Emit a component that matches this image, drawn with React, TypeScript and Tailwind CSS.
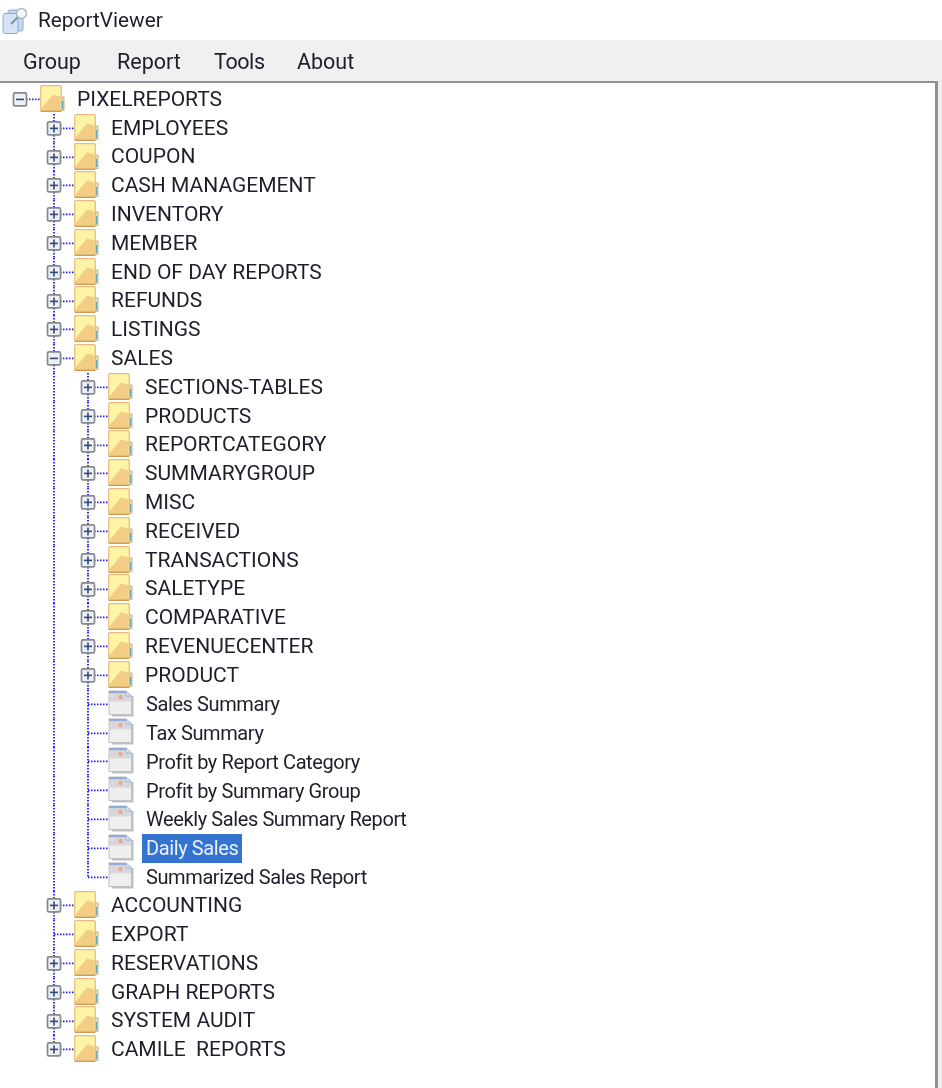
import React from "react";

const BLUE = "#1c1cf5";

type Mode = "pass" | "plus" | "minus" | "leaf" | "last" | "none" | "rootMinus" | "lastPlus";

function Connector({ mode }: { mode: Mode }) {
  // 34 wide cell; line centre at x=20 within the cell
  const cx = 20;
  const H = 28.8;
  const mid = H / 2;
  if (mode === "none") return <div className="h-[28.8px] w-[34px] shrink-0" />;
  const bottom = mode === "last" || mode === "lastPlus" ? mid : H;
  const showBox = mode === "plus" || mode === "minus" || mode === "rootMinus" || mode === "lastPlus";
  const hasPlus = mode === "plus" || mode === "lastPlus";
  return (
    <svg width="34" height={H} viewBox={`0 0 34 ${H}`} className="block shrink-0 overflow-visible">
      {mode !== "rootMinus" && (
        <line x1={cx} y1={0} x2={cx} y2={bottom} stroke={BLUE} strokeWidth="1.8" strokeDasharray="1.5 1.5" />
      )}
      {mode !== "pass" && (
        <line x1={cx} y1={mid} x2={40} y2={mid} stroke={BLUE} strokeWidth="1.8" strokeDasharray="1.5 1.5" />
      )}
      {showBox && (
        <g>
          <rect x={cx - 6.5} y={mid - 6.5} width="13" height="13" rx="1.5" fill="#eef0f3" stroke="#85888e" strokeWidth="1.7" />
          <line x1={cx - 4} y1={mid} x2={cx + 4} y2={mid} stroke="#2f4a80" strokeWidth="1.6" />
          {hasPlus && <line x1={cx} y1={mid - 4} x2={cx} y2={mid + 4} stroke="#2f4a80" strokeWidth="1.6" />}
        </g>
      )}
    </svg>
  );
}

function Folder() {
  return (
    <svg width="25" height="27" viewBox="0 0 25 27" className="block shrink-0">
      <path d="M21 12 h3 v13.500 h-3z" fill="#e8dcb8" stroke="#cdb27a" strokeWidth="1" />
      <line x1="22.500" y1="16" x2="22.500" y2="24" stroke="#5aa6c0" strokeWidth="1.400" />
      <rect x="0.700" y="0.700" width="20.600" height="25.600" rx="1" fill="#fdf4a6" stroke="#eabb80" strokeWidth="1.200" />
      <path d="M1.300 23.500 L13 9.500 L20.700 11.500 V26 H1.300 Z" fill="#f3cd85" />
      <path d="M0.700 26.300 H21.300" stroke="#cf9c55" strokeWidth="1.400" />
    </svg>
  );
}

function Doc() {
  return (
    <svg width="26" height="27" viewBox="0 0 26 27" className="block shrink-0">
      <path d="M4 6 H25.500 V26.500 H4 Z" fill="#bfc0c3" />
      <path d="M1 1 H18 L23.500 6 V24.500 H1 Z" fill="#efefef" stroke="#bfc0c4" strokeWidth="1" />
      <rect x="1" y="1" width="17" height="2.500" fill="#94aad2" />
      <rect x="1" y="3.500" width="22" height="8" fill="#d6d7da" />
      <circle cx="12.500" cy="7" r="2.200" fill="#f4a585" />
      <path d="M18 1 L23.500 6 H18 Z" fill="#dfe6f1" stroke="#8fb0d8" strokeWidth="0.800" />
    </svg>
  );
}

type Row = { label: string; cells: Mode[]; doc?: boolean; selected?: boolean };

const lvl1 = (label: string, mode: Mode = "plus"): Row => ({ label, cells: ["none", mode] });
const lvl2 = (label: string): Row => ({ label, cells: ["none", "pass", "plus"] });
const doc = (label: string, last = false, selected = false): Row => ({
  label,
  cells: ["none", "pass", last ? "last" : "leaf"],
  doc: true,
  selected,
});

const rows: Row[] = [
  { label: "PIXELREPORTS", cells: ["rootMinus"] },
  lvl1("EMPLOYEES"),
  lvl1("COUPON"),
  lvl1("CASH MANAGEMENT"),
  lvl1("INVENTORY"),
  lvl1("MEMBER"),
  lvl1("END OF DAY REPORTS"),
  lvl1("REFUNDS"),
  lvl1("LISTINGS"),
  lvl1("SALES", "minus"),
  lvl2("SECTIONS-TABLES"),
  lvl2("PRODUCTS"),
  lvl2("REPORTCATEGORY"),
  lvl2("SUMMARYGROUP"),
  lvl2("MISC"),
  lvl2("RECEIVED"),
  lvl2("TRANSACTIONS"),
  lvl2("SALETYPE"),
  lvl2("COMPARATIVE"),
  lvl2("REVENUECENTER"),
  lvl2("PRODUCT"),
  doc("Sales Summary"),
  doc("Tax Summary"),
  doc("Profit by Report Category"),
  doc("Profit by Summary Group"),
  doc("Weekly Sales Summary Report"),
  doc("Daily Sales", false, true),
  doc("Summarized Sales Report", true),
  lvl1("ACCOUNTING"),
  lvl1("EXPORT", "leaf"),
  lvl1("RESERVATIONS"),
  lvl1("GRAPH REPORTS"),
  lvl1("SYSTEM AUDIT"),
  lvl1("CAMILE  REPORTS", "lastPlus"),
];

function TreeRow({ row }: { row: Row }) {
  return (
    <div className="flex h-[28.8px] items-center">
      {row.cells.map((c, i) => (
        <Connector key={i} mode={c} />
      ))}
      <div className="ml-[6px] mb-[2px] shrink-0">{row.doc ? <Doc /> : <Folder />}</div>
      <span
        className={
          row.selected
            ? "ml-[8px] flex h-[29px] items-center whitespace-pre bg-[#3474d0] px-[4px] text-[20px] tracking-[-0.4px] text-[#e9f0fb]"
            : row.doc
              ? "ml-[12px] whitespace-pre text-[20px] tracking-[-0.4px]"
              : "ml-[12px] whitespace-pre"
        }
      >
        {row.label}
      </span>
    </div>
  );
}

export default function App() {
  return (
    <div
      className="flex h-[1088px] w-[942px] flex-col overflow-hidden bg-[#f0f0f0] text-[#1d1f2b] blur-[0.35px]"
      style={{ fontFamily: 'Roboto, "Noto Sans", sans-serif' }}
    >
      <div className="flex h-[40px] shrink-0 items-center bg-white pl-[2px]">
        <svg width="26" height="27" viewBox="0 0 26 27" className="block shrink-0">
          <rect x="6" y="3" width="15" height="21" rx="2" fill="#c6d8f1" stroke="#8ea9d2" />
          <rect x="1" y="6.500" width="15" height="20" rx="2" fill="#d5e3f6" stroke="#8ea9d2" />
          <circle cx="19.500" cy="6.500" r="5" fill="#f4f7fb" stroke="#a9b7c9" strokeWidth="1.500" />
          <line x1="15.500" y1="10.500" x2="9" y2="17" stroke="#8a8f98" strokeWidth="2" />
        </svg>
        <span className="ml-[10px] text-[20.800px] leading-none">ReportViewer</span>
      </div>
      <div className="flex h-[41px] shrink-0 items-center pl-[23px] pt-[2px] text-[21.500px] leading-none">
        <span className="w-[94px]">Group</span>
        <span className="w-[97px]">Report</span>
        <span className="w-[83px] tracking-[-0.4px]">Tools</span>
        <span>About</span>
      </div>
      <div className="mr-[4px] min-h-0 flex-1 border-r-[3px] border-t-2 border-[#8d919c] bg-white pt-[2px] text-[21px] leading-none">
        {rows.map((r) => (
          <TreeRow key={r.label} row={r} />
        ))}
      </div>
    </div>
  );
}
